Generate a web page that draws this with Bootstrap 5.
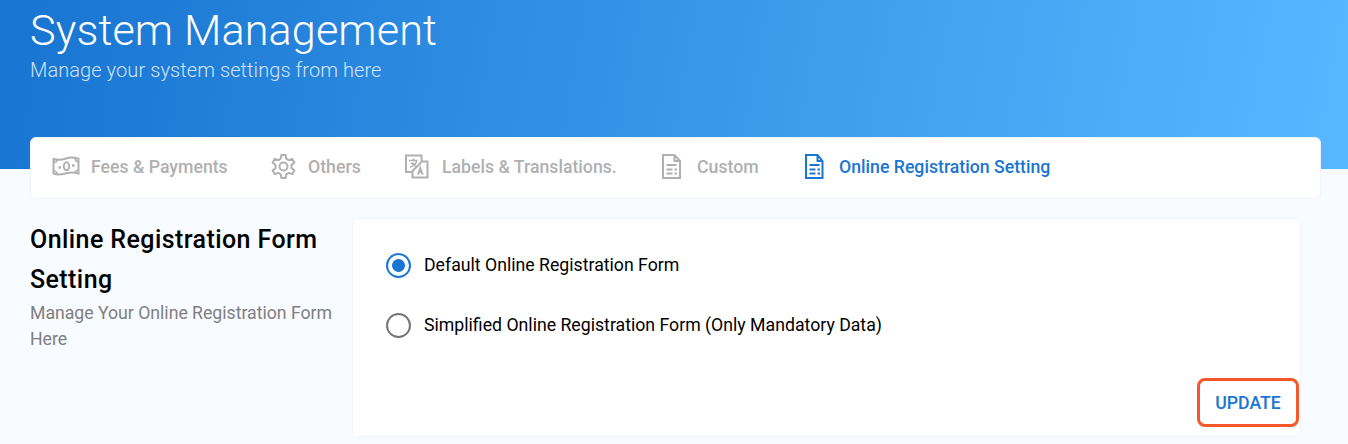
<!DOCTYPE html>
<html lang="en">
<head>
<meta charset="utf-8">
<meta name="viewport" content="width=device-width, initial-scale=1">
<title>System Management</title>
<link href="https://cdn.jsdelivr.net/npm/bootstrap@5.3.0/dist/css/bootstrap.min.css" rel="stylesheet">
<style>
body{font-family:Roboto,sans-serif;background:#f8fbff;color:#000;overflow:hidden}
.hero{height:169px;padding:6px 30px 0;background:linear-gradient(100deg,#1976d2 3%,#57b6ff 98%)}
.hero h1{font-size:43.2px;font-weight:300;line-height:49px;letter-spacing:.12px}
.hero p{font-size:20px;font-weight:300;line-height:31px;color:rgba(255,255,255,.8);letter-spacing:.08px}
.tabs{margin:-32px 27px 0 30px;height:62px;border:1px solid #f0f4fa;border-radius:6px;padding:0 21px 2px}
.tabs .nav-link{font-size:17.7px;font-weight:500;line-height:26px;color:#b0b0b0;padding:0;white-space:nowrap}
.tabs .nav-link.active{color:#1976d2}
.tabs svg{flex:none;margin-right:10px}
.side{width:322px;padding-top:2px}
.side h2{font-size:25px;font-weight:500;line-height:40px;letter-spacing:.42px}
.side p{font-size:17.7px;line-height:26px;color:#808080;letter-spacing:-.02px}
.panel{width:949px;height:219px;border:1px solid #f1f5fa;border-radius:5px;padding:33px 1px 9px 33px}
.form-check{min-height:26px;padding:0;gap:13px}
.form-check .form-check-input{width:25px;height:25px;margin:0;float:none;border:2px solid #757575;flex:none}
.form-check .form-check-input:checked{background:radial-gradient(circle,#1976d2 6px,#fff 6.8px);border-color:#1976d2}
.form-check-label{font-size:17.7px;line-height:26px}
.btn-update{width:102px;height:49px;border:3px solid #f4582a;border-radius:8px;color:#1976d2;font-size:17.7px;font-weight:500;padding:2px 0 0}
</style>
</head>
<body>
<header class="hero text-white">
  <h1 class="mb-0">System Management</h1>
  <p class="mb-0">Manage your system settings from here</p>
</header>
<nav class="tabs nav bg-white align-items-center flex-nowrap position-relative">
  <a class="nav-link d-flex align-items-center" style="width:218px" href="#">
    <svg width="29" height="24" viewBox="0 0 29 24" fill="none" stroke="currentColor" stroke-width="2"><path d="M1.500 4C8 6 11 4.500 14 3.500s8-1.200 12.500.2V18.500c-5-2-9-1-13 0s-8 2-12 0z"/><path d="M2 7.500q2.500 0 3.500-2.500M26.500 15q-3 0-3.500 3M2 16q2.500 0 3.500 3M26.500 7q-2.500 0-3.500-3" stroke-width="1.500"/><ellipse cx="14.500" cy="11.300" rx="2.700" ry="4"/><path d="M6.500 12.500H9M20 10.500h2.500" stroke-width="2.400"/></svg>Fees &amp; Payments</a>
  <a class="nav-link d-flex align-items-center" style="width:134px" href="#">
    <svg width="28" height="28" viewBox="0 .5 28 28" fill="none" stroke="currentColor" stroke-width="2"><path d="M11.500 2.500h4l.8 3.700 2.400 1.400 3.600-1.200 2 3.600-2.800 2.500v3l2.800 2.500-2 3.600-3.600-1.200-2.400 1.400-.8 3.700h-4l-.8-3.700-2.400-1.400-3.600 1.200-2-3.600 2.800-2.500v-3L2.700 10l2-3.600 3.600 1.200 2.400-1.400z"/><circle cx="13.500" cy="14" r="4"/></svg>Others</a>
  <a class="nav-link d-flex align-items-center" style="width:255px" href="#">
    <svg width="28" height="28" viewBox="0 .5 28 28" fill="none" stroke="currentColor" stroke-width="2"><path d="M8.500 19.500H2V3h15.500v5.500M8.500 25V18.500L18 9h5.500v16z"/><path d="M5 8h8.500M9.500 6v2M6.500 11h4M12.500 8q0 5-6.500 6.500M8 11l4 3" stroke-width="1.500"/><path d="m13 22.500 3.300-10 3.300 10-1.800-.5-1.500-2-1.500 2z" fill="currentColor" stroke="none"/></svg>Labels &amp; Translations.</a>
  <a class="nav-link d-flex align-items-center" style="width:142px" href="#">
    <svg width="28" height="28" viewBox="-1 1 28 28" fill="none" stroke="currentColor" stroke-width="2"><path d="M3 3h11.500l5.500 6v17H3zM14.500 3v6H20"/><path d="M6.500 13h10M6.500 17.500h6M6.500 21.500h6M14.500 17.500h2.500M14.500 21.500h2.500"/></svg>Custom</a>
  <a class="nav-link active d-flex align-items-center" href="#">
    <svg width="28" height="28" viewBox="-2 1 28 28" fill="none" stroke="currentColor" stroke-width="2"><path d="M3 3h11.500l5 6v17H3zM14.500 3v6h5"/><path d="M6.500 13h10M6.500 17.500h6M6.500 21.500h6M14.500 17.500h2.500M14.500 21.500h2.500"/></svg>Online Registration Setting</a>
</nav>
<main class="d-flex" style="padding:19px 0 0 30px">
  <section class="side flex-shrink-0">
    <h2 class="mb-0">Online Registration Form Setting</h2>
    <p class="mb-0">Manage Your Online Registration Form Here</p>
  </section>
  <section class="panel bg-white flex-shrink-0 d-flex flex-column">
    <div class="form-check d-flex align-items-center mb-0">
      <input class="form-check-input" type="radio" name="form" id="f1" checked><label class="form-check-label" for="f1">Default Online Registration Form</label>
    </div>
    <div class="form-check d-flex align-items-center mb-0" style="margin-top:34px">
      <input class="form-check-input" type="radio" name="form" id="f2"><label class="form-check-label" for="f2">Simplified Online Registration Form (Only Mandatory Data)</label>
    </div>
    <button class="btn btn-update align-self-end mt-auto">UPDATE</button>
  </section>
</main>
<script src="https://cdn.jsdelivr.net/npm/bootstrap@5.3.0/dist/js/bootstrap.bundle.min.js"></script>
</body>
</html>
